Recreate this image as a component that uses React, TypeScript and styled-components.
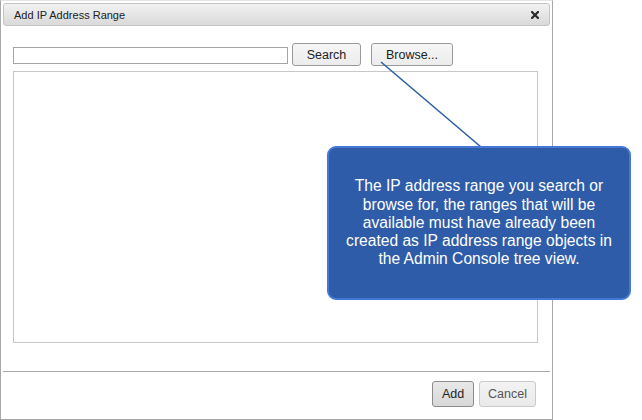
import React from "react";
import styled, { createGlobalStyle } from "styled-components";

const Global = createGlobalStyle`
  html, body { margin: 0; padding: 0; background: #ffffff; }
  body { font-family: "Liberation Sans", Arial, sans-serif; }
  * { box-sizing: border-box; }
`;

const Page = styled.div`
  position: relative;
  width: 642px;
  height: 420px;
  overflow: hidden;
  background: #ffffff;
`;

const Dialog = styled.div`
  width: 553px;
  height: 420px;
  border: 1px solid #a8a8a8;
  border-top-color: #e4e4e4;
  padding: 2px;
  display: flex;
  flex-direction: column;
  background: #ffffff;
`;

const TitleBar = styled.div`
  height: 23px;
  flex: none;
  border: 1px solid #c4c4c4;
  border-radius: 3px;
  background: linear-gradient(#f2f2f2, #d9d9d9);
  display: flex;
  align-items: center;
  justify-content: space-between;
  padding: 0 10px 0 10px;
  font-size: 11px;
  color: #222;
`;

const CloseIcon = styled.svg`
  width: 8px;
  height: 8px;
  display: block;
`;

const Body = styled.div`
  flex: 1;
  padding: 17px 12px 0 10px;
  display: flex;
  flex-direction: column;
  gap: 5px;
`;

const Toolbar = styled.div`
  display: flex;
  align-items: center;
  height: 23px;
`;

const TextInput = styled.div`
  width: 275px;
  height: 17px;
  border: 1px solid #a4a4a4;
  margin-top: 2px;
  background: #fff;
`;

const Button = styled.div<{ $w: number; $ml?: number; $h?: number; $variant?: "primary" | "muted" }>`
  width: ${(p) => p.$w}px;
  height: ${(p) => p.$h ?? 23}px;
  margin-left: ${(p) => p.$ml ?? 0}px;
  border: 1px solid ${(p) => (p.$variant === "muted" ? "#cacaca" : p.$variant === "primary" ? "#8c8c8c" : "#9a9a9a")};
  border-radius: 3px;
  background: ${(p) =>
    p.$variant === "primary"
      ? "linear-gradient(#e8e8e8, #d8d8d8)"
      : p.$variant === "muted"
      ? "linear-gradient(#f3f3f3, #e9e9e9)"
      : "linear-gradient(#f6f6f6, #ececec)"};
  color: ${(p) => (p.$variant === "muted" ? "#555" : "#222")};
  font-size: 12.5px;
  display: flex;
  align-items: center;
  justify-content: center;
  flex: none;
`;

const ListBox = styled.div`
  width: 525px;
  height: 272px;
  border: 1px solid #c8c8c8;
  background: #fff;
`;

const Footer = styled.div`
  height: 46px;
  flex: none;
  border-top: 1px solid #a8a8a8;
  display: flex;
  justify-content: flex-end;
  align-items: flex-start;
  padding: 9px 14px 0 0;
  gap: 5px;
`;

const Leader = styled.svg`
  position: absolute;
  left: 0;
  top: 0;
  width: 642px;
  height: 420px;
  pointer-events: none;
`;

const Callout = styled.div`
  position: absolute;
  left: 327px;
  top: 146px;
  width: 304px;
  height: 154px;
  border: 2px solid #4677d6;
  border-radius: 9px;
  background: #2e5ca8;
  color: #ffffff;
  font-size: 15.6px;
  line-height: 18.3px;
  text-align: center;
  display: flex;
  align-items: center;
  justify-content: center;
  padding: 0 4px;
`;

export default function App() {
  return (
    <Page>
      <Global />
      <Dialog>
        <TitleBar>
          <span>Add IP Address Range</span>
          <CloseIcon viewBox="0 0 8 8">
            <path d="M1 1 L7 7 M7 1 L1 7" stroke="#2a2a2a" strokeWidth="2.2" strokeLinecap="square" />
          </CloseIcon>
        </TitleBar>
        <Body>
          <Toolbar>
            <TextInput />
            <Button $w={69} $ml={4}>Search</Button>
            <Button $w={82} $ml={10}>Browse...</Button>
          </Toolbar>
          <ListBox />
        </Body>
        <Footer>
          <Button $w={42} $h={26} $variant="primary">Add</Button>
          <Button $w={57} $h={26} $variant="muted">Cancel</Button>
        </Footer>
      </Dialog>
      <Leader viewBox="0 0 642 420">
        <line x1="381" y1="62" x2="481" y2="147" stroke="#2f5ea8" strokeWidth="1.6" />
      </Leader>
      <Callout>
        <div>
          The IP address range you search or
          <br />
          browse for, the ranges that will be
          <br />
          available must have already been
          <br />
          created as IP address range objects in
          <br />
          the Admin Console tree view.
        </div>
      </Callout>
    </Page>
  );
}
